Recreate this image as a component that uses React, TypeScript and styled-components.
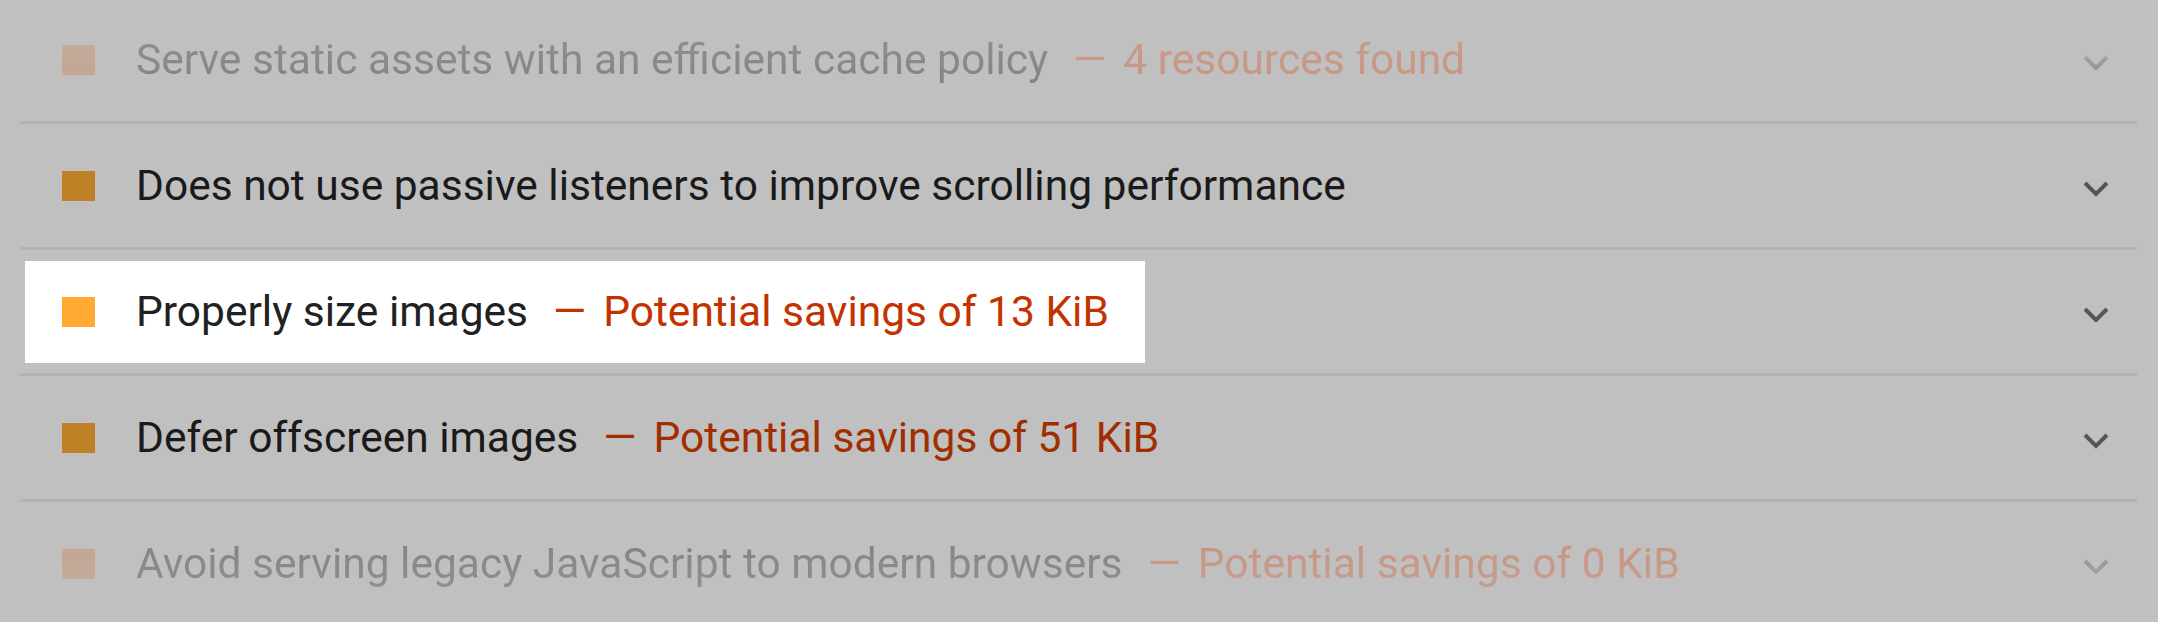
import styled, { createGlobalStyle, css } from 'styled-components';

type Fade = 'top' | 'bottom' | 'none';

interface Audit {
    title: string;
    detail?: string;
    fade: Fade;
    spotlight?: boolean;
}

const audits: Audit[] = [
    { title: 'Serve static assets with an efficient cache policy', detail: '4 resources found', fade: 'top' },
    { title: 'Does not use passive listeners to improve scrolling performance', fade: 'none' },
    { title: 'Properly size images', detail: 'Potential savings of 13 KiB', fade: 'none', spotlight: true },
    { title: 'Defer offscreen images', detail: 'Potential savings of 51 KiB', fade: 'none' },
    {
        title: 'Avoid serving legacy JavaScript to modern browsers',
        detail: 'Potential savings of 0 KiB',
        fade: 'bottom',
    },
];

function Chevron() {
    return (
        <ChevronIcon width='28' height='18' viewBox='0 0 28 18' aria-hidden='true'>
            <polyline points='3,3 14,14 25,3' fill='none' stroke='currentColor' strokeWidth='4' />
        </ChevronIcon>
    );
}

function App() {
    return (
        <>
            <GlobalStyle />
            <AuditList>
                {audits.map((audit) => {
                    const spotlight = !!audit.spotlight;
                    const faded = audit.fade !== 'none';
                    return (
                        <AuditRow key={audit.title} fade={audit.fade}>
                            <Summary spotlight={spotlight}>
                                <Score spotlight={spotlight} faded={faded} />
                                <Title spotlight={spotlight}>{audit.title}</Title>
                                {audit.detail && (
                                    <Detail spotlight={spotlight} faded={faded}>
                                        <Dash>—</Dash>
                                        {audit.detail}
                                    </Detail>
                                )}
                            </Summary>
                            <Chevron />
                        </AuditRow>
                    );
                })}
            </AuditList>
        </>
    );
}

export default App;

const GlobalStyle = createGlobalStyle`
    html, body {
        margin: 0;
        background: #c0c0c0;
        overflow: hidden;
    }
    body {
        font-family: Roboto, 'Liberation Sans', sans-serif;
    }
`;

const AuditList = styled.div`
    margin: -2px 21px 0 20px;
`;

const fadeMask = {
    top: css`
        -webkit-mask-image: linear-gradient(to bottom, rgba(0, 0, 0, 0.24), rgba(0, 0, 0, 0.42));
        mask-image: linear-gradient(to bottom, rgba(0, 0, 0, 0.24), rgba(0, 0, 0, 0.42));
    `,
    bottom: css`
        -webkit-mask-image: linear-gradient(to bottom, rgba(0, 0, 0, 0.42), rgba(0, 0, 0, 0.24));
        mask-image: linear-gradient(to bottom, rgba(0, 0, 0, 0.42), rgba(0, 0, 0, 0.24));
    `,
    none: css``,
};

const AuditRow = styled.div<{ fade: Fade }>`
    display: flex;
    align-items: center;
    height: 123px;
    border-bottom: 3px solid #b3b3b3;

    > * {
        ${({ fade }) => fadeMask[fade]}
    }
`;

const Summary = styled.div<{ spotlight: boolean }>`
    display: flex;
    align-items: center;
    height: 102px;
    margin-left: 5px;
    padding: 0 36px 0 37px;
    background: ${({ spotlight }) => (spotlight ? '#ffffff' : 'transparent')};
    font-size: 42.5px;
    white-space: nowrap;
`;

const Score = styled.span<{ spotlight: boolean; faded: boolean }>`
    width: 33px;
    height: 30px;
    flex-shrink: 0;
    margin-right: 41px;
    background: ${({ spotlight, faded }) => (spotlight ? '#ffaa33' : faded ? '#cc7b43' : '#c08026')};
`;

const Title = styled.span<{ spotlight: boolean }>`
    color: ${({ spotlight }) => (spotlight ? '#212121' : '#1a1a1a')};
`;

const Detail = styled.span<{ spotlight: boolean; faded: boolean }>`
    color: ${({ spotlight, faded }) => (spotlight ? '#c33300' : faded ? '#d84a14' : '#a02e00')};
`;

const Dash = styled.span`
    margin: 0 17px 0 25px;
`;

const ChevronIcon = styled.svg`
    margin: 6px 27px 0 auto;
    color: #555555;
    flex-shrink: 0;
`;
